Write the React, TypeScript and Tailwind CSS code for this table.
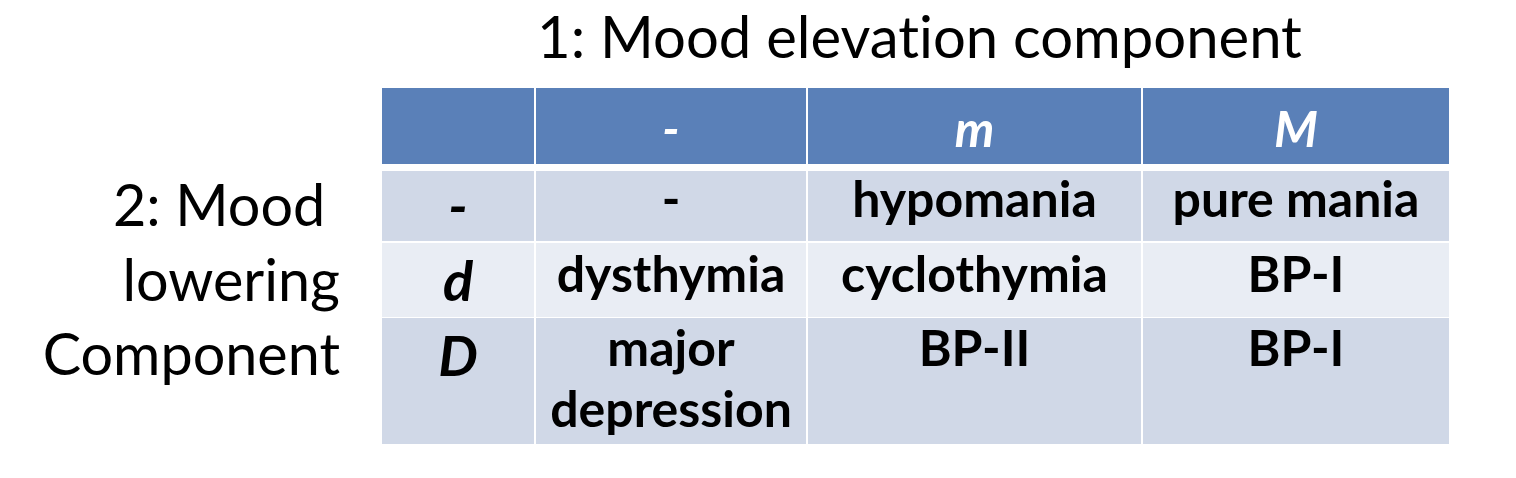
import React from "react";

const Hd = ({ children }: { children?: React.ReactNode }) => (
  <div className="bg-[#5a80b8] text-white font-bold italic text-center pt-[10px] leading-[60px] text-[50px]">
    {children}
  </div>
);

export default function App() {
  const cellBase = "text-center font-bold text-black text-[50px]";
  const labelBase = "text-center font-bold italic text-black text-[56px]";
  return (
    <div className="w-[1516px] h-[478px] bg-white font-['Lato',sans-serif] [font-variant-ligatures:none] flex flex-row">
      <div className="w-[340px] pt-[167px] text-right text-[57.5px] leading-[74.5px] text-black">
        <div>2: Mood&nbsp;</div>
        <div>lowering</div>
        <div>Component</div>
      </div>
      <div className="ml-[42px] w-[1067px] flex flex-col">
        <div className="h-[88px] pl-[8px] text-center text-[58px] leading-[68px] pt-[2px] text-black">
          1: Mood elevation component
        </div>
        <div className="grid grid-cols-[152px_270px_333px_306px] gap-x-[2px] bg-white">
          <div className="h-[76px] grid grid-cols-subgrid col-span-4 mb-[7px]">
            <Hd />
            <Hd>-</Hd>
            <Hd>m</Hd>
            <Hd>M</Hd>
          </div>
          <div className="h-[70px] grid grid-cols-subgrid col-span-4 bg-white mb-[2px]">
            <div className={`${labelBase} bg-[#d0d8e7] leading-[67px]`}>-</div>
            <div className={`${cellBase} bg-[#d0d8e7] leading-[54px]`}>-</div>
            <div className={`${cellBase} bg-[#d0d8e7] leading-[54px]`}>hypomania</div>
            <div className={`${cellBase} bg-[#d0d8e7] leading-[54px]`}>pure mania</div>
          </div>
          <div className="h-[73px] grid grid-cols-subgrid col-span-4 mb-[2px]">
            <div className={`${labelBase} bg-[#e9edf4] leading-[74px]`}>d</div>
            <div className={`${cellBase} bg-[#e9edf4] leading-[61px]`}>dysthymia</div>
            <div className={`${cellBase} bg-[#e9edf4] leading-[61px]`}>cyclothymia</div>
            <div className={`${cellBase} bg-[#e9edf4] leading-[61px]`}>BP-I</div>
          </div>
          <div className="h-[126px] grid grid-cols-subgrid col-span-4">
            <div className={`${labelBase} bg-[#d0d8e7] leading-[74px]`}>D</div>
            <div className={`${cellBase} bg-[#d0d8e7] leading-[61px]`}>
              <div className="-mt-[1px]">
                major
                <br />
                depression
              </div>
            </div>
            <div className={`${cellBase} bg-[#d0d8e7] leading-[61px]`}>
              <div className="-mt-[1px]">BP-II</div>
            </div>
            <div className={`${cellBase} bg-[#d0d8e7] leading-[61px]`}>
              <div className="-mt-[1px]">BP-I</div>
            </div>
          </div>
        </div>
      </div>
    </div>
  );
}
